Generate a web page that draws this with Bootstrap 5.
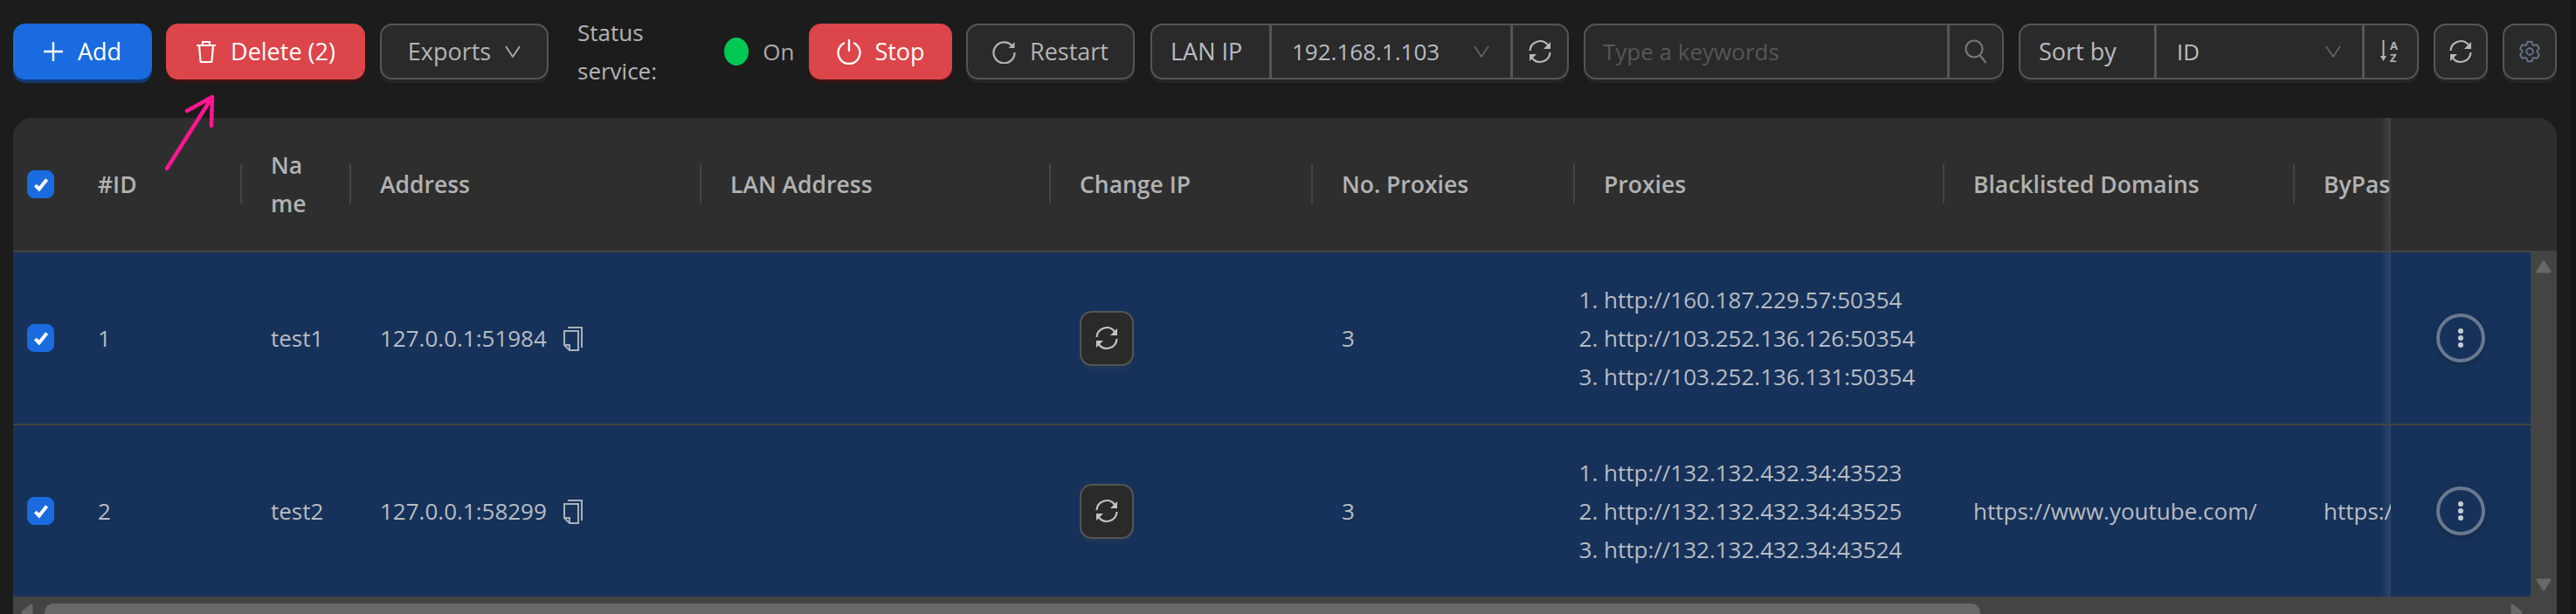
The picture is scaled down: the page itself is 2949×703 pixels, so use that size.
<!DOCTYPE html>
<html lang="en">

<head>
    <meta charset="UTF-8">
    <meta name="viewport" content="width=device-width, initial-scale=1.0">
    <title>Proxy list</title>

    <link href="https://cdn.jsdelivr.net/npm/bootstrap@5.3.2/dist/css/bootstrap.min.css" rel="stylesheet">
    <style>
        html,
        body {
            height: 100%;
            overflow: hidden;
        }

        body {
            background-color: #141414;
            font-family: "Open Sans", "Noto Sans", sans-serif;
            font-size: 26px;
            color: #b8b8b8;
        }

        .page-wrap {
            position: relative;
            width: 2943px;
            height: 703px;
            padding: 27px 16px 0 15px;
            background-color: #1c1c1c;
            overflow: hidden;
        }

        /* toolbar */
        .tool-bar {
            height: 64px;
            margin-bottom: 44px;
        }

        .tool-btn {
            height: 64px;
            padding: 0;
            display: flex;
            align-items: center;
            justify-content: center;
            flex-shrink: 0;
            font-size: 27px;
            border-radius: 14px;
            border: 2px solid #555;
            background-color: #2a2a2a;
            color: #b4b4b4;
            box-shadow: 0 4px 0 #252525;
        }

        .tool-btn.btn-primary {
            background-color: #1a6be0;
            border-color: #1a6be0;
            color: #fff;
            box-shadow: 0 4px 0 #123a72;
        }

        .tool-btn.btn-danger {
            background-color: #dc4549;
            border-color: #dc4549;
            color: #fff;
            box-shadow: 0 4px 0 #3a1315;
        }

        .w-add { width: 159px; gap: 17px; }
        .w-del { width: 228px; gap: 16px; }
        .w-exp { width: 193px; gap: 16px; margin-left: 1px; }
        .w-stop { width: 164px; gap: 14px; }
        .w-restart { width: 193px; gap: 16px; }
        .w-icon { width: 62px; margin-left: 1px; }

        .status-label {
            width: 169px;
            margin-left: 17px;
            margin-right: -16px;
            line-height: 44px;
            color: #b4b4b4;
        }

        .status-dot {
            width: 28px;
            height: 32px;
            border-radius: 50%;
            background-color: #00c853;
            flex-shrink: 0;
        }

        .status-on {
            width: 37px;
            color: #aaa;
        }

        .tool-group {
            height: 64px;
            flex-wrap: nowrap;
            border-radius: 14px;
            box-shadow: 0 4px 0 #252525;
        }

        .tool-group .input-group-text,
        .tool-group .form-select,
        .tool-group .form-control,
        .tool-group .group-btn {
            height: 64px;
            font-size: 26px;
            background-color: #2a2a2a;
            border: 2px solid #555;
            color: #b8bcc2;
            box-shadow: none;
        }

        .tool-group > :first-child {
            border-top-left-radius: 14px;
            border-bottom-left-radius: 14px;
        }

        .tool-group > :last-child {
            border-top-right-radius: 14px;
            border-bottom-right-radius: 14px;
        }

        .tool-group .input-group-text {
            padding: 0 0 0 21px;
            justify-content: flex-start;
            font-size: 27px;
        }

        .tool-group .form-select {
            padding: 0 40px 0 23px;
            flex: none;
            background-image: url("data:image/svg+xml,%3csvg xmlns='http://www.w3.org/2000/svg' viewBox='0 0 18 14'%3e%3cpath fill='none' stroke='%23666' stroke-width='1.6' d='M1 1l8 12 8-12'/%3e%3c/svg%3e");
            background-size: 18px 14px;
            background-position: right 24px center;
        }

        .tool-group .form-control {
            padding: 0 0 0 20px;
            flex: none;
        }

        .tool-group .form-control::placeholder {
            color: #565656;
        }

        .tool-group .group-btn {
            display: flex;
            align-items: center;
            justify-content: center;
            padding: 0;
            flex: none;
        }

        .g-lan { width: 479px; margin-left: 2px; }
        .g-lan .input-group-text { width: 140px; }
        .g-lan .form-select { width: 277px; }
        .g-lan .group-btn { width: 66px; }

        .g-search { width: 480px; margin-left: 1px; }
        .g-search .form-control { width: 418px; }
        .g-search .group-btn { width: 64px; }

        .g-sort { width: 458px; margin-left: 2px; }
        .g-sort .input-group-text { width: 159px; }
        .g-sort .form-select { width: 239px; }
        .g-sort .group-btn { width: 64px; }

        /* table panel */
        .proxy-panel {
            height: 568px;
            width: 2912px;
            border-radius: 22px 22px 0 0;
            overflow: hidden;
            background-color: #2e2e2e;
        }

        .proxy-main {
            width: 2882px;
            flex-shrink: 0;
        }

        .proxy-scroll {
            overflow: hidden;
            height: 548px;
        }

        .proxy-table {
            width: 3172px;
            table-layout: fixed;
            border-collapse: separate;
            border-spacing: 0;
            margin: 0;
            --bs-table-bg: transparent;
            --bs-table-color: #b8bcc2;
            font-size: 26px;
            line-height: 44px;
        }

        .proxy-table > thead > tr > th {
            position: relative;
            height: 154px;
            padding: 0 0 0 33px;
            vertical-align: middle;
            font-size: 26.5px;
            font-weight: 600;
            color: #b2b2b2;
            white-space: nowrap;
            background-color: #2e2e2e;
            border-bottom: 2px solid #444;
        }

        .proxy-table > thead > tr > th.col-sep::after {
            content: "";
            position: absolute;
            right: 0;
            top: 53px;
            width: 2px;
            height: 45px;
            background-color: #444;
        }

        .proxy-table > tbody > tr > td {
            height: 198px;
            padding: 0 0 0 33px;
            vertical-align: middle;
            white-space: nowrap;
            background-color: #16325a;
            border-bottom: 2px solid #444;
        }

        .proxy-table > tbody > tr:last-child > td {
            height: 196px;
            border-bottom: 0;
        }

        .proxy-table > thead > tr > th.check-cell,
        .proxy-table > tbody > tr > td.check-cell {
            padding-left: 16px;
        }

        .proxy-table > thead > tr > th.action-cell,
        .proxy-table > tbody > tr > td.action-cell {
            position: sticky;
            right: 0;
            padding: 0;
            z-index: 2;
        }

        .action-cell::before {
            content: "";
            position: absolute;
            left: -12px;
            top: 0;
            bottom: 0;
            width: 12px;
            background: linear-gradient(to right, rgba(255, 255, 255, 0), rgba(255, 255, 255, 0.1));
        }

        .row-check.form-check-input {
            width: 31px;
            height: 32px;
            margin: 0;
            display: block;
            border-radius: 8px;
            border-color: #1a6be0;
            background-color: #1a6be0;
            background-size: 22px 22px;
            background-image: url("data:image/svg+xml,%3csvg xmlns='http://www.w3.org/2000/svg' viewBox='0 0 20 20'%3e%3cpath fill='none' stroke='%23fff' stroke-width='3.6' d='M4 11l4 4 8-10'/%3e%3c/svg%3e");
        }

        .copy-icon {
            margin-left: 19px;
            vertical-align: -5px;
        }

        .proxy-list {
            list-style: decimal outside;
            padding: 0;
            margin: 0;
        }

        .row-refresh {
            width: 62px;
            height: 63px;
            box-shadow: 0 4px 0 #1f3555;
        }

        .more-btn {
            width: 56px;
            height: 56px;
            margin-left: 52px;
            padding: 0;
            border-radius: 50%;
            border: 4px solid #6a788e;
            background: transparent;
            display: flex;
            align-items: center;
            justify-content: center;
            box-shadow: 0 2px 6px rgba(0, 0, 0, 0.25);
        }

        /* scrollbars */
        .h-track {
            height: 20px;
            background-color: #444;
            padding: 8px 0 0 9px;
            position: relative;
            gap: 13px;
            overflow: hidden;
        }

        .h-thumb {
            width: 2216px;
            height: 30px;
            background-color: #686868;
            border-radius: 10px;
        }

        .h-next {
            position: absolute;
            top: 8px;
            right: 9px;
        }

        .v-col {
            width: 30px;
            flex-shrink: 0;
        }

        .v-head {
            height: 152px;
            background-color: #2e2e2e;
        }

        .v-track {
            flex: 1;
            background-color: #444;
            padding: 11px 0 0 6px;
            position: relative;
        }

        .v-next {
            position: absolute;
            left: 6px;
            top: 375px;
        }

        .arrow-note {
            position: absolute;
            left: 180px;
            top: 100px;
            pointer-events: none;
        }
    </style>
</head>

<body>
    <div class="page-wrap">
        <!-- toolbar -->
        <div class="tool-bar d-flex align-items-center gap-3">
            <button class="btn btn-primary tool-btn w-add">
                <svg width="22" height="22" viewBox="0 0 22 22"><path d="M11 0v22M0 11h22" stroke="#fff" stroke-width="2.4" /></svg>
                Add
            </button>
            <button class="btn btn-danger tool-btn w-del">
                <svg width="24" height="26" viewBox="0 0 24 26" fill="none" stroke="#fff" stroke-width="2.2"><path d="M1 6h22M8 6V2h8v4M4 6l1.500 18a1 1 0 0 0 1 1h11a1 1 0 0 0 1-1L20 6" /></svg>
                Delete (2)
            </button>
            <button class="btn tool-btn w-exp">
                Exports
                <svg width="18" height="14" viewBox="0 0 18 14" fill="none" stroke="#aaa" stroke-width="1.800"><path d="M1 1l8 12 8-12" /></svg>
            </button>
            <div class="status-label">Status<br>service:</div>
            <span class="status-dot"></span>
            <span class="status-on">On</span>
            <button class="btn btn-danger tool-btn w-stop">
                <svg width="30" height="30" viewBox="0 0 30 30" fill="none" stroke="#fff" stroke-width="2.4" stroke-linecap="round"><path d="M15 2v12M9 5.500a12.500 12.500 0 1 0 12 0" /></svg>
                Stop
            </button>
            <button class="btn tool-btn w-restart">
                <svg width="27" height="27" viewBox="0 0 27 27" fill="none" stroke="#b4b4b4" stroke-width="2.200"><path d="M23 7A12 12 0 1 0 25.500 14" /><path d="M25.500 2v7h-7z" fill="#b4b4b4" stroke="none" /></svg>
                Restart
            </button>
            <div class="input-group tool-group g-lan">
                <span class="input-group-text">LAN IP</span>
                <select class="form-select"><option>192.168.1.103</option></select>
                <button class="btn group-btn">
                    <svg width="28" height="28" viewBox="0 0 28 28" fill="none" stroke="#b8b8b8" stroke-width="2.200"><path d="M2.500 13A11.500 11.500 0 0 1 23 6.500" /><path d="M25.500 15A11.500 11.500 0 0 1 5 21.500" /><path d="M26 3v8h-8zM2 25v-8h8z" fill="#b8b8b8" stroke="none" /></svg>
                </button>
            </div>
            <div class="input-group tool-group g-search">
                <input class="form-control" type="text" placeholder="Type a keywords">
                <button class="btn group-btn">
                    <svg width="26" height="28" viewBox="0 0 26 28" fill="none" stroke="#777" stroke-width="2.200"><circle cx="11" cy="11" r="9.500" /><path d="M17.500 18l7 9" /></svg>
                </button>
            </div>
            <div class="input-group tool-group g-sort">
                <span class="input-group-text">Sort by</span>
                <select class="form-select"><option>ID</option></select>
                <button class="btn group-btn">
                    <svg width="24" height="26" viewBox="0 0 24 26"><path d="M3.500 0v20" stroke="#b4b4b4" stroke-width="2" /><path d="M0 18h7l-3.500 6z" fill="#b4b4b4" /><text x="11" y="11" font-family="Open Sans" font-size="13" font-weight="700" fill="#b4b4b4">A</text><text x="11" y="25" font-family="Open Sans" font-size="13" font-weight="700" fill="#b4b4b4">Z</text></svg>
                </button>
            </div>
            <button class="btn tool-btn w-icon">
                <svg width="28" height="28" viewBox="0 0 28 28" fill="none" stroke="#b8b8b8" stroke-width="2.200"><path d="M2.500 13A11.500 11.500 0 0 1 23 6.500" /><path d="M25.500 15A11.500 11.500 0 0 1 5 21.500" /><path d="M26 3v8h-8zM2 25v-8h8z" fill="#b8b8b8" stroke="none" /></svg>
            </button>
            <button class="btn tool-btn w-icon">
                <svg width="30" height="30" viewBox="0 0 24 24" fill="none" stroke="#67758e" stroke-width="1.500"><path d="M9.594 3.940c.09-.542.56-.94 1.110-.94h2.593c.55 0 1.020.398 1.110.94l.213 1.281c.063.374.313.686.645.87.074.04.147.083.22.127.325.196.72.257 1.075.124l1.217-.456a1.125 1.125 0 0 1 1.370.49l1.296 2.247a1.125 1.125 0 0 1-.26 1.431l-1.003.827c-.293.241-.438.613-.43.992a7.723 7.723 0 0 1 0 .255c-.008.378.137.75.43.991l1.004.827c.424.35.534.955.26 1.430l-1.298 2.247a1.125 1.125 0 0 1-1.369.491l-1.217-.456c-.355-.133-.75-.072-1.076.124a6.470 6.470 0 0 1-.22.128c-.331.183-.581.495-.644.869l-.213 1.281c-.09.543-.56.94-1.110.94h-2.594c-.55 0-1.019-.398-1.110-.94l-.213-1.281c-.062-.374-.312-.686-.644-.87a6.520 6.520 0 0 1-.22-.127c-.325-.196-.72-.257-1.076-.124l-1.217.456a1.125 1.125 0 0 1-1.369-.49l-1.297-2.247a1.125 1.125 0 0 1 .26-1.431l1.004-.827c.292-.24.437-.613.43-.991a6.932 6.932 0 0 1 0-.255c.007-.38-.138-.751-.43-.992l-1.004-.827a1.125 1.125 0 0 1-.26-1.430l1.297-2.247a1.125 1.125 0 0 1 1.370-.491l1.216.456c.356.133.751.072 1.076-.124.072-.044.146-.086.22-.128.332-.183.582-.495.644-.869l.214-1.280z" /><circle cx="12" cy="12" r="3" /></svg>
            </button>
        </div>

        <!-- table -->
        <div class="proxy-panel d-flex">
            <div class="proxy-main">
                <div class="proxy-scroll">
                    <table class="table proxy-table">
                        <colgroup>
                            <col style="width:64px">
                            <col style="width:198px">
                            <col style="width:125px">
                            <col style="width:401px">
                            <col style="width:400px">
                            <col style="width:300px">
                            <col style="width:300px">
                            <col style="width:423px">
                            <col style="width:401px">
                            <col style="width:400px">
                            <col style="width:160px">
                        </colgroup>
                        <thead>
                            <tr>
                                <th class="check-cell"><input class="form-check-input row-check" type="checkbox" checked></th>
                                <th class="col-sep">#ID</th>
                                <th class="col-sep">Na<br>me</th>
                                <th class="col-sep">Address</th>
                                <th class="col-sep">LAN Address</th>
                                <th class="col-sep">Change IP</th>
                                <th class="col-sep">No. Proxies</th>
                                <th class="col-sep">Proxies</th>
                                <th class="col-sep">Blacklisted Domains</th>
                                <th class="col-sep">ByPass Domains</th>
                                <th class="action-cell"></th>
                            </tr>
                        </thead>
                        <tbody id="proxyRows"></tbody>
                    </table>
                </div>
                <div class="h-track d-flex">
                    <svg class="flex-shrink-0" width="14" height="20" viewBox="0 0 14 20"><path d="M12 2L2 10l10 8z" fill="#686868" stroke="#686868" stroke-width="3" stroke-linejoin="round" /></svg>
                    <div class="h-thumb flex-shrink-0"></div>
                    <svg class="h-next" width="14" height="20" viewBox="0 0 14 20"><path d="M2 2l10 8-10 8z" fill="#686868" stroke="#686868" stroke-width="3" stroke-linejoin="round" /></svg>
                </div>
            </div>
            <div class="v-col d-flex flex-column">
                <div class="v-head"></div>
                <div class="v-track">
                    <svg class="d-block" width="18" height="15" viewBox="0 0 18 15"><path d="M9 2l7 11H2z" fill="#686868" stroke="#686868" stroke-width="3" stroke-linejoin="round" /></svg>
                    <svg class="v-next d-block" width="18" height="15" viewBox="0 0 18 15"><path d="M9 13L2 2h14z" fill="#686868" stroke="#686868" stroke-width="3" stroke-linejoin="round" /></svg>
                </div>
            </div>
        </div>

        <!-- pink arrow drawn over the screenshot -->
        <svg class="arrow-note" width="70" height="100" viewBox="0 0 70 100" fill="none" stroke="#ff1690" stroke-width="4.500" stroke-linecap="round" stroke-linejoin="round">
            <path d="M11 93L63 11M34 27L63 11l-1 33" />
        </svg>
    </div>

    <script src="https://cdn.jsdelivr.net/npm/bootstrap@5.3.2/dist/js/bootstrap.bundle.min.js"></script>
    <script>
        const syncIcon = '<svg width="28" height="28" viewBox="0 0 28 28" fill="none" stroke="#c4c4c4" stroke-width="2.200"><path d="M2.500 13A11.500 11.500 0 0 1 23 6.500" /><path d="M25.500 15A11.500 11.500 0 0 1 5 21.500" /><path d="M26 3v8h-8zM2 25v-8h8z" fill="#c4c4c4" stroke="none" /></svg>';
        const copyIcon = '<svg class="copy-icon" width="22" height="28" viewBox="0 0 22 28" fill="none" stroke="#a9b0ba" stroke-width="2"><path d="M5 1h16v23" /><path d="M1 5h16v22H7l-6-6zM1 21h6v6" /></svg>';
        const moreIcon = '<svg width="8" height="24" viewBox="0 0 8 24" fill="#c4cad4"><circle cx="4" cy="4" r="3" /><circle cx="4" cy="12" r="3" /><circle cx="4" cy="20" r="3" /></svg>';

        const rows = [
            {
                id: 1, name: 'test1', address: '127.0.0.1:51984', blacklist: '', bypass: '',
                proxies: ['http://160.187.229.57:50354', 'http://103.252.136.126:50354', 'http://103.252.136.131:50354']
            },
            {
                id: 2, name: 'test2', address: '127.0.0.1:58299', blacklist: 'https://www.youtube.com/', bypass: 'https://www.google.com/',
                proxies: ['http://132.132.432.34:43523', 'http://132.132.432.34:43525', 'http://132.132.432.34:43524']
            }
        ];

        document.getElementById('proxyRows').innerHTML = rows.map(row => `
            <tr>
                <td class="check-cell"><input class="form-check-input row-check" type="checkbox" checked></td>
                <td>${row.id}</td>
                <td>${row.name}</td>
                <td>${row.address}${copyIcon}</td>
                <td></td>
                <td><button class="btn tool-btn row-refresh">${syncIcon}</button></td>
                <td>${row.proxies.length}</td>
                <td><ol class="proxy-list">${row.proxies.map(p => `<li>${p}</li>`).join('')}</ol></td>
                <td>${row.blacklist}</td>
                <td>${row.bypass}</td>
                <td class="action-cell"><button class="more-btn">${moreIcon}</button></td>
            </tr>
        `).join('');
    </script>
</body>

</html>
